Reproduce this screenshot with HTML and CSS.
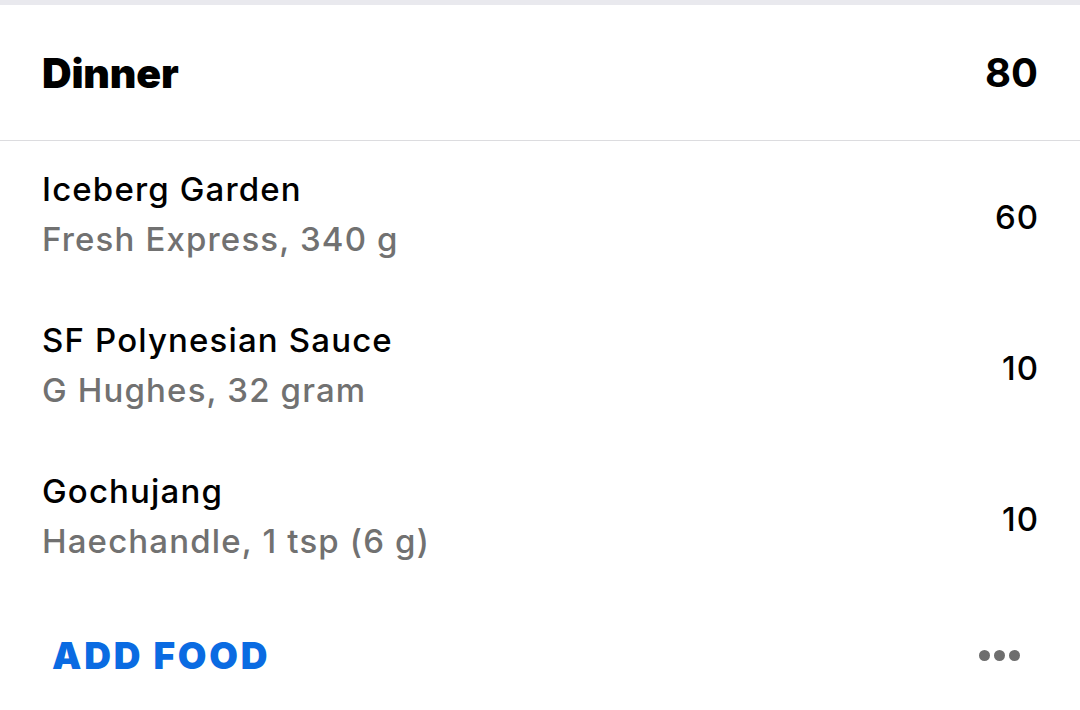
FILE: index.html
```html
<!DOCTYPE html>
<html>
<head>
<meta charset="utf-8">
<link rel="stylesheet" href="styles.css">
</head>
<body>
<div class="topband"></div>
<section class="meal">
  <header class="meal-header">
    <h1 class="meal-title">Dinner</h1>
    <span class="meal-total">80</span>
  </header>
  <ul class="food-list">
    <li class="food-row">
      <div class="food-info">
        <div class="food-name">Iceberg Garden</div>
        <div class="food-detail">Fresh Express, 340 g</div>
      </div>
      <div class="food-cal">60</div>
    </li>
    <li class="food-row">
      <div class="food-info">
        <div class="food-name">SF Polynesian Sauce</div>
        <div class="food-detail">G Hughes, 32 gram</div>
      </div>
      <div class="food-cal">10</div>
    </li>
    <li class="food-row">
      <div class="food-info">
        <div class="food-name">Gochujang</div>
        <div class="food-detail">Haechandle, 1 tsp (6 g)</div>
      </div>
      <div class="food-cal">10</div>
    </li>
  </ul>
  <footer class="meal-footer">
    <span class="add-food">ADD FOOD</span>
    <span class="more" aria-label="More"><i></i><i></i><i></i></span>
  </footer>
</section>
</body>
</html>
```

FILE: styles.css
```css
* { box-sizing: border-box; }
html, body {
  margin: 0;
  padding: 0;
  background: #ffffff;
  font-family: Inter, "Liberation Sans", sans-serif;
  color: #000;
}
.topband {
  height: 5px;
  background: #e9e9ee;
}
.meal-header {
  height: 136px;
  display: flex;
  align-items: center;
  justify-content: space-between;
  padding: 0 42px;
  border-bottom: 1px solid #dcdcdf;
}
.meal-title {
  margin: 0;
  font-size: 41px;
  font-weight: 900;
  letter-spacing: -0.2px;
}
.meal-total {
  font-size: 40px;
  font-weight: 700;
}
.food-list {
  list-style: none;
  margin: 0;
  padding: 0;
}
.food-row {
  height: 151px;
  display: flex;
  align-items: center;
  justify-content: space-between;
  padding: 0 42px 6px 42px;
}
.food-info {
  display: flex;
  flex-direction: column;
}
.food-name,
.food-detail {
  font-size: 33px;
  font-weight: 500;
  line-height: 50px;
  letter-spacing: 1.15px;
}
.food-detail {
  color: #717171;
}
.food-cal {
  font-size: 33px;
  font-weight: 500;
  letter-spacing: 1px;
  margin: 7px -1px 0 0;
}
.meal-footer {
  height: 118px;
  display: flex;
  align-items: center;
  justify-content: space-between;
  padding: 4px 60px 0 52px;
}
.add-food {
  font-size: 37px;
  font-weight: 900;
  letter-spacing: 2.8px;
  color: #0a6be2;
}
.more {
  display: flex;
  gap: 4px;
}
.more i {
  width: 11px;
  height: 11px;
  border-radius: 50%;
  background: #6e6e6e;
}
```
